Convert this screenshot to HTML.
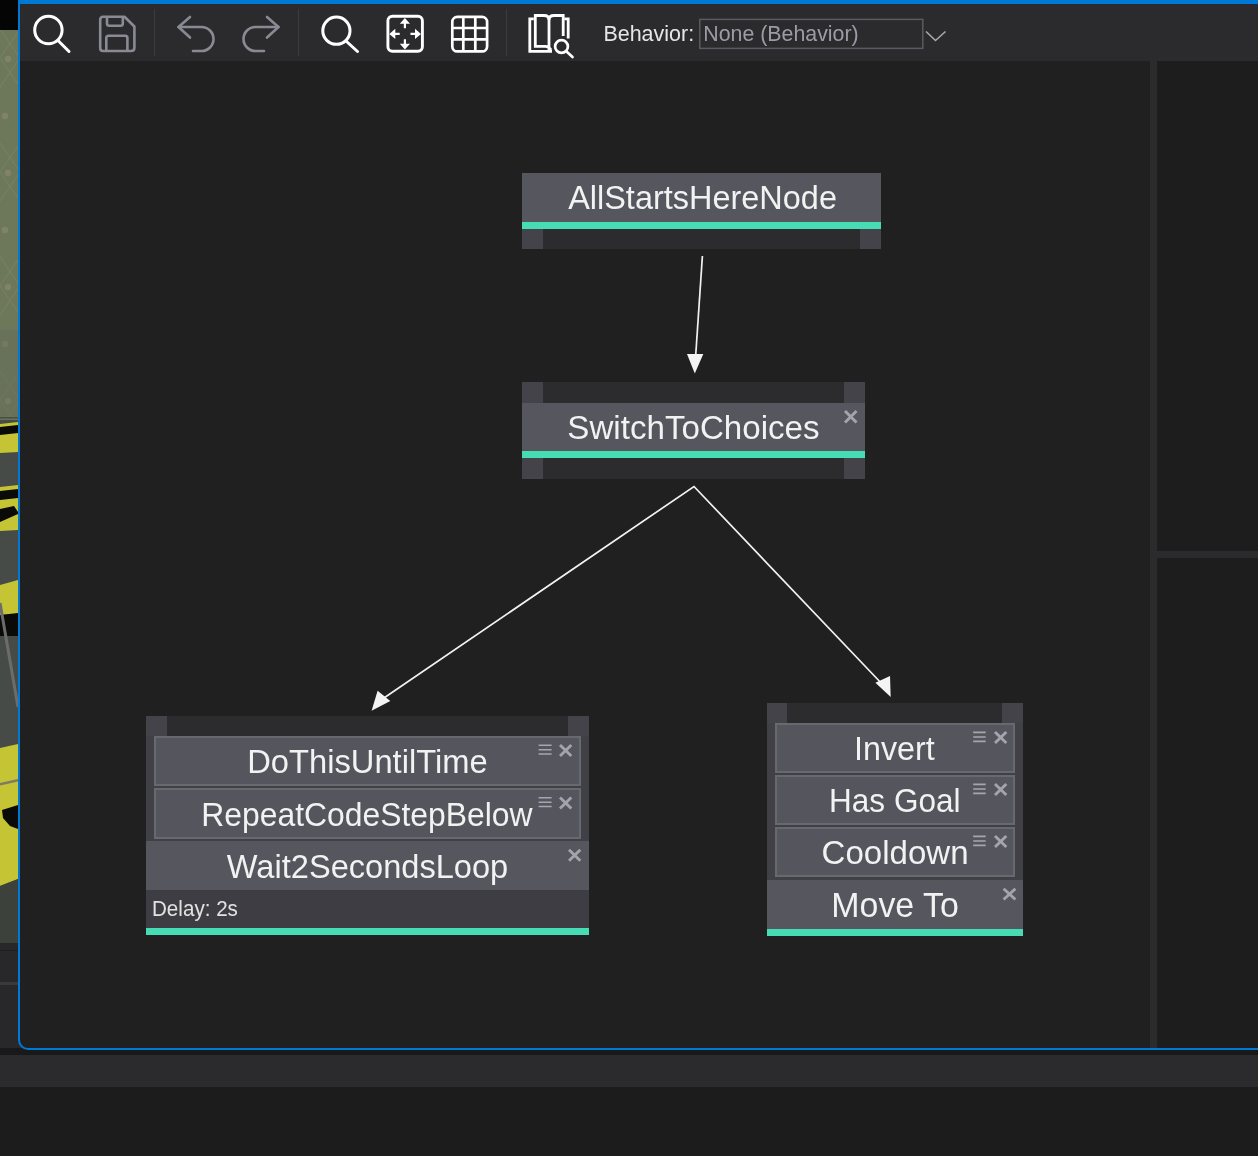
<!DOCTYPE html>
<html><head><meta charset="utf-8">
<style>
html,body{margin:0;padding:0;}
body{width:1258px;height:1156px;overflow:hidden;position:relative;background:#1c1c1c;font-family:"Liberation Sans",sans-serif;}
.a{position:absolute;}
.t{position:absolute;white-space:nowrap;color:#f2f2f2;line-height:1;transform-origin:0 0;will-change:transform;}
.title{font-size:32.5px;}
.pinrow{position:absolute;background:#2c2c2f;}
.pb{position:absolute;top:0;bottom:0;width:21px;background:#434349;}
.body{position:absolute;background:#56565e;}
.teal{position:absolute;background:#46dcb4;}
.side{position:absolute;background:#404046;}
.dec{position:absolute;background:#55555e;box-sizing:border-box;border:2px solid #68686f;}
</style></head><body>

<!-- left game strip -->
<svg class="a" style="left:0;top:0" width="18" height="943" viewBox="0 0 18 943">
  <defs>
    <pattern id="wp" x="0" y="2" width="40" height="114" patternUnits="userSpaceOnUse">
      <rect width="40" height="114" fill="#6d785b"/>
      <path d="M-40 114 L40 -2 M-20 114 L60 -2 M-40 -2 L40 114 M-20 -2 L60 114" stroke="#82886a" stroke-width="1" opacity=".5"/>
      <circle cx="8" cy="57" r="3.2" fill="#8f8d6b" opacity=".55"/>
      <circle cx="5" cy="114" r="3.2" fill="#8f8d6b" opacity=".55"/>
      <circle cx="5" cy="0" r="3.2" fill="#8f8d6b" opacity=".55"/>
    </pattern>
  </defs>
  <rect x="0" y="0" width="18" height="943" fill="#474b48"/>
  <rect x="0" y="0" width="18" height="30" fill="#050505"/>
  <rect x="0" y="30" width="18" height="390" fill="url(#wp)"/>
  <rect x="0" y="330" width="18" height="90" fill="#5e6556" opacity=".35"/>
  <rect x="0" y="417" width="18" height="1.5" fill="#4a4f44"/>
  <polygon points="0,424 18,422 18,452 0,453" fill="#c4c435"/>
  <polygon points="0,427 18,425 18,433 0,435" fill="#0a0a08"/>
  <polygon points="0,487 18,485 18,530 0,531" fill="#c4c435"/>
  <polygon points="0,491 18,489 18,498 0,500" fill="#0a0a08"/>
  <polygon points="0,509 14,506 18,512 18,514 0,522" fill="#0a0a08"/>
  <polygon points="0,585 18,580 18,614 0,615" fill="#c4c435"/>
  <polygon points="0,615 18,613 18,636 0,636" fill="#0a0a08"/>
  <polygon points="0,654 18,652 18,746 0,748" fill="#474b48"/>
  <line x1="0" y1="603" x2="18" y2="707" stroke="#6c6c6a" stroke-width="3"/>
  <polygon points="0,748 18,744 18,879 0,886" fill="#c4c435"/>
  <polygon points="0,783 18,779 18,781.5 0,785.5" fill="#7c7c62"/>
  <polygon points="2,810 18,805 18,829 10,826 3,818" fill="#0a0a08"/>
  <polygon points="0,886 18,879 18,943 0,943" fill="#3d413b"/>
</svg>
<!-- left lower panel -->
<div class="a" style="left:0;top:943px;width:30px;height:105px;background:#28282b"></div>
<div class="a" style="left:0;top:950px;width:18px;height:1px;background:#1e1e1f"></div>
<div class="a" style="left:0;top:982px;width:18px;height:3px;background:#3a3a3d"></div>

<!-- bottom bands -->
<div class="a" style="left:0;top:1048px;width:1258px;height:7px;background:#19191a"></div>
<div class="a" style="left:0;top:1055px;width:1258px;height:32px;background:#2b2b2e"></div>

<!-- window -->
<div class="a" style="left:18px;top:0;width:1250px;height:1050px;box-sizing:border-box;border-left:2px solid #0078d6;border-bottom:2px solid #0078d6;border-top:4px solid #0078d6;border-bottom-left-radius:10px;background:#202020;overflow:hidden"></div>

<!-- toolbar -->
<div class="a" style="left:20px;top:4px;width:1238px;height:57px;background:#2b2b2e"></div>

<!-- right panel -->
<div class="a" style="left:1150px;top:61px;width:7px;height:987px;background:#2b2b2e"></div>
<div class="a" style="left:1157px;top:61px;width:101px;height:987px;background:#1d1d1d"></div>
<div class="a" style="left:1157px;top:551px;width:101px;height:7px;background:#2b2b2e"></div>

<!-- toolbar icons -->
<svg class="a" style="left:0;top:0" width="1258" height="61" viewBox="0 0 1258 61">
  <!-- separators -->
  <g fill="#3c3c40">
    <rect x="154" y="9" width="1" height="47"/>
    <rect x="298" y="9" width="1" height="47"/>
    <rect x="506" y="9" width="1" height="47"/>
  </g>
  <g fill="none" stroke="#ffffff" stroke-width="3" stroke-linecap="round">
    <circle cx="48.4" cy="30" r="13.7"/>
    <line x1="58" y1="40.5" x2="69" y2="51.5"/>
    <circle cx="336.4" cy="30.7" r="13.6"/>
    <line x1="346" y1="41" x2="357.5" y2="51.5"/>
  </g>
  <!-- save -->
  <g fill="none" stroke="#8a8a94" stroke-width="2.6" stroke-linejoin="round">
    <path d="M103 16.8 H124.5 L134.4 26.5 V47.8 Q134.4 51 131 51 H103 Q100.2 51 100.2 48 V19.8 Q100.2 16.8 103 16.8 Z"/>
    <path d="M107 17 V23.5 Q107 25.8 109.3 25.8 H120.5 Q122.8 25.8 122.8 23.5 V17"/>
    <path d="M106.3 51 V38 Q106.3 35.8 108.5 35.8 H125.2 Q127.4 35.8 127.4 38 V51"/>
  </g>
  <!-- undo / redo -->
  <g fill="none" stroke="#8a8a94" stroke-width="2.6" stroke-linecap="round" stroke-linejoin="round">
    <path d="M190 17 L178.5 27 L190 37.5"/>
    <path d="M178.5 27 H201.5 A12 12 0 0 1 201.5 51 H193"/>
    <path d="M267 17 L278.5 27 L267 37.5"/>
    <path d="M278.5 27 H255.5 A12 12 0 0 0 255.5 51 H264"/>
  </g>
  <!-- fit -->
  <g fill="none" stroke="#ffffff" stroke-width="2.9">
    <rect x="387.9" y="16.3" width="34.5" height="35" rx="4.5"/>
  </g>
  <g fill="#ffffff">
    <path d="M404.9 18 L410 23.8 L406 23.8 L406 28.3 L403.8 28.3 L403.8 23.8 L399.8 23.8 Z"/>
    <path d="M404.9 49.6 L410 43.8 L406 43.8 L406 39.3 L403.8 39.3 L403.8 43.8 L399.8 43.8 Z"/>
    <path d="M389.3 33.9 L395.3 28.8 L395.3 32.8 L399.7 32.8 L399.7 35 L395.3 35 L395.3 39 Z"/>
    <path d="M421 33.9 L415 28.8 L415 32.8 L410.5 32.8 L410.5 35 L415 35 L415 39 Z"/>
  </g>
  <!-- grid -->
  <g fill="none" stroke="#ffffff" stroke-width="2.7">
    <rect x="452.3" y="16.9" width="34.8" height="34.5" rx="5"/>
    <line x1="463.3" y1="17" x2="463.3" y2="51.3"/>
    <line x1="475.3" y1="17" x2="475.3" y2="51.3"/>
    <line x1="452.3" y1="28" x2="487.1" y2="28"/>
    <line x1="452.3" y1="39.3" x2="487.1" y2="39.3"/>
  </g>
  <!-- book -->
  <g fill="none" stroke="#ffffff" stroke-width="2.8" stroke-linejoin="miter">
    <path d="M533.8 18.8 H529.8 V51.3 H552"/>
    <path d="M564.3 18.8 H568.2 V38.5"/>
    <path d="M549 51 V20 Q549 15.5 544 15.5 H535.3 V46.3 H545.3 Q549 46.3 551 50"/>
    <path d="M549 20 Q549 15.5 554 15.5 H563.2 V36"/>
  </g>
  <g fill="none" stroke="#ffffff" stroke-width="2.7" stroke-linecap="round">
    <circle cx="561.5" cy="46.5" r="6.4"/>
    <line x1="566.5" y1="51.5" x2="572.5" y2="57"/>
  </g>
  <!-- dropdown -->
  <rect x="699.8" y="19.4" width="223" height="29" fill="none" stroke="#5a5a62" stroke-width="1.5"/>
  <path d="M926 31.5 L935.5 40.5 L945.5 31.5" fill="none" stroke="#a8a8b0" stroke-width="1.6"/>
</svg>

<!-- arrows -->
<svg class="a" style="left:0;top:0" width="1150" height="1048" viewBox="0 0 1150 1048">
  <g stroke="#f2f2f2" stroke-width="1.7" fill="none">
    <line x1="702.4" y1="256" x2="695.6" y2="357"/>
    <path d="M381 700 L694 486.5 L884 686"/>
  </g>
  <g fill="#f4f4f4">
    <path d="M687 354 L703.3 354 L694.8 373.5 Z"/>
    <path d="M371.6 710.7 L377.6 690.8 L390.3 701.1 Z"/>
    <path d="M890.7 697.1 L890 676.1 L875.4 682.8 Z"/>
  </g>
</svg>

<!-- node 1 -->
<div class="a" style="left:522px;top:173px;width:359px;height:76px">
  <div class="body" style="left:0;top:0;width:359px;height:49px"></div>
  <div class="teal" style="left:0;top:49px;width:359px;height:7px"></div>
  <div class="pinrow" style="left:0;top:56px;width:359px;height:20px"><div class="pb" style="left:0"></div><div class="pb" style="right:0"></div></div>
</div>

<!-- node 2 -->
<div class="a" style="left:522px;top:382px;width:343px;height:97px">
  <div class="pinrow" style="left:0;top:0;width:343px;height:21px"><div class="pb" style="left:0"></div><div class="pb" style="right:0"></div></div>
  <div class="body" style="left:0;top:21px;width:343px;height:48px"></div>
  <div class="teal" style="left:0;top:69px;width:343px;height:7px"></div>
  <div class="pinrow" style="left:0;top:76px;width:343px;height:21px"><div class="pb" style="left:0"></div><div class="pb" style="right:0"></div></div>
</div>

<!-- node 3 -->
<div class="a" style="left:146px;top:716px;width:443px;height:219px">
  <div class="pinrow" style="left:0;top:0;width:443px;height:20px"><div class="pb" style="left:0"></div><div class="pb" style="right:0"></div></div>
  <div class="side" style="left:0;top:20px;width:443px;height:105px"></div>
  <div class="dec" style="left:8px;top:20px;width:427px;height:50px"></div>
  <div class="dec" style="left:8px;top:72px;width:427px;height:51px"></div>
  <div class="body" style="left:0;top:125px;width:443px;height:49px"></div>
  <div class="a" style="left:0;top:174px;width:443px;height:38px;background:#3d3d43"></div>
  <div class="teal" style="left:0;top:212px;width:443px;height:7px"></div>
</div>

<!-- node 4 -->
<div class="a" style="left:767px;top:703px;width:256px;height:233px">
  <div class="pinrow" style="left:0;top:0;width:256px;height:20px"><div class="pb" style="left:0;width:20px"></div><div class="pb" style="right:0"></div></div>
  <div class="side" style="left:0;top:20px;width:256px;height:157px"></div>
  <div class="dec" style="left:8px;top:20px;width:240px;height:50px"></div>
  <div class="dec" style="left:8px;top:72px;width:240px;height:50px"></div>
  <div class="dec" style="left:8px;top:124px;width:240px;height:50px"></div>
  <div class="body" style="left:0;top:177px;width:256px;height:49px"></div>
  <div class="teal" style="left:0;top:226px;width:256px;height:7px"></div>
</div>

<!-- node icons -->
<svg class="a" style="left:0;top:0" width="1150" height="1048" viewBox="0 0 1150 1048">
  <g stroke="#a4a4ac" stroke-width="2.9" fill="none">
    <!-- X icons -->
    <path d="M845 411 L856.5 422.5 M856.5 411 L845 422.5"/>
    <path d="M560 745 L571.3 756 M571.3 745 L560 756"/>
    <path d="M560 797.5 L571.3 808.5 M571.3 797.5 L560 808.5"/>
    <path d="M569 849.7 L580.3 860.7 M580.3 849.7 L569 860.7"/>
    <path d="M995 732 L1006.3 743 M1006.3 732 L995 743"/>
    <path d="M995 784 L1006.3 795 M1006.3 784 L995 795"/>
    <path d="M995 836 L1006.3 847 M1006.3 836 L995 847"/>
    <path d="M1003.6 888.7 L1015.4 899.5 M1015.4 888.7 L1003.6 899.5"/>
  </g>
  <g stroke="#a6a6ae" stroke-width="1.6" fill="none">
    <path d="M538.6 745.2 H551.6 M538.6 749.7 H551.6 M538.6 754 H551.6"/>
    <path d="M538.6 797.7 H551.6 M538.6 802.2 H551.6 M538.6 806.5 H551.6"/>
    <path d="M973.2 732.4 H985.7 M973.2 737 H985.7 M973.2 741.4 H985.7"/>
    <path d="M973.2 784.4 H985.7 M973.2 789 H985.7 M973.2 793.4 H985.7"/>
    <path d="M973.2 836.4 H985.7 M973.2 841 H985.7 M973.2 845.4 H985.7"/>
  </g>
</svg>

<!-- texts -->
<svg class="a" style="left:0;top:0;will-change:transform" width="1258" height="1156" viewBox="0 0 1258 1156" font-family="Liberation Sans, sans-serif">
  <text id="t1" transform="matrix(0.9665 0 0 1 568.13 209.00)" font-size="33.60" fill="#f2f2f2">AllStartsHereNode</text>
  <text id="t2" transform="matrix(0.9865 0 0 1 567.31 439.00)" font-size="33.60" fill="#f2f2f2">SwitchToChoices</text>
  <text id="t3" transform="matrix(0.9738 0 0 1 247.16 773.00)" font-size="33.60" fill="#f2f2f2">DoThisUntilTime</text>
  <text id="t4" transform="matrix(0.9485 0 0 1 201.27 826.00)" font-size="33.60" fill="#f2f2f2">RepeatCodeStepBelow</text>
  <text id="t5" transform="matrix(0.9703 0 0 1 226.79 878.00)" font-size="33.60" fill="#f2f2f2">Wait2SecondsLoop</text>
  <text id="t6" transform="matrix(0.9596 0 0 1 854.08 760.00)" font-size="33.60" fill="#f2f2f2">Invert</text>
  <text id="t7" transform="matrix(0.9388 0 0 1 829.05 812.00)" font-size="33.60" fill="#f2f2f2">Has Goal</text>
  <text id="t8" transform="matrix(0.9839 0 0 1 821.55 864.00)" font-size="33.60" fill="#f2f2f2">Cooldown</text>
  <text id="t9" transform="matrix(0.9584 0 0 1 831.29 917.00)" font-size="35.40" fill="#f2f2f2">Move To</text>
  <text id="t10" transform="matrix(0.9552 0 0 1 151.97 916.00)" font-size="21.60" fill="#e2e2e2">Delay: 2s</text>
  <text id="tb1" transform="matrix(0.9951 0 0 1 603.39 41.00)" font-size="21.60" fill="#e6e6e6">Behavior:</text>
  <text id="tb2" transform="matrix(0.9883 0 0 1 703.27 41.00)" font-size="21.60" fill="#9c9ca6">None (Behavior)</text>
</svg>
</body></html>
